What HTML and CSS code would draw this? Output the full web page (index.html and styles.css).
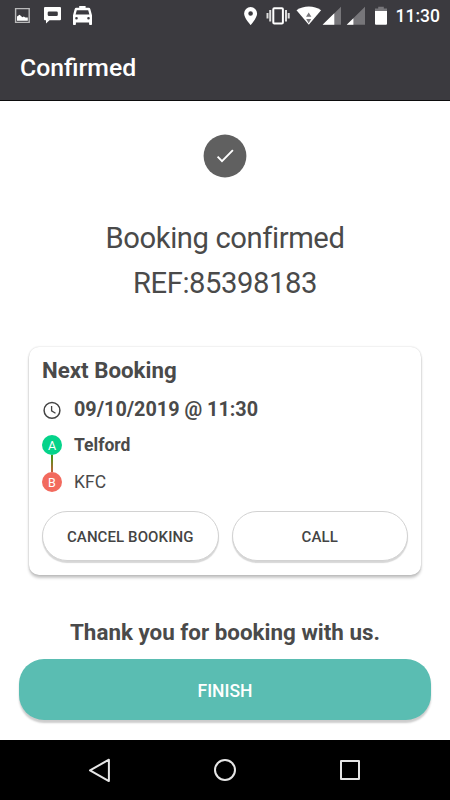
FILE: index.html
```html
<!DOCTYPE html>
<html lang="en">
<head>
	<meta charset="utf-8">
	<meta name="viewport" content="width=device-width, initial-scale=1" />
	<title>Confirmed</title>
	<link rel="stylesheet" href="styles.css">
</head>
<body>
	<header class="header">
		<div class="status">
			<svg class="status__left" width="100" height="32" viewBox="0 0 100 32">
				<!-- picture -->
				<path d="M15.600 8.600h13.600v13.800H15.600z" fill="none" stroke="#b9b9ba" stroke-width="1.400"/>
				<path d="M17 20.800v-4.400l2.600-1.600 2.800 2.400 1.400-.8 1.600 1.200 2.400-.2v3.400z" fill="#fff"/>
				<!-- message -->
				<path fill="#fff" fill-rule="evenodd" d="M45 7h15q1 0 1 1v11.200q0 1-1 1H49.500L46 23.500V20.200H45q-1 0-1-1V8q0-1 1-1zM49 11.500q-1.300 0-1.300 1.300v1.900q0 1.300 1.300 1.300h7.500q1.300 0 1.300-1.300v-1.900q0-1.300-1.300-1.300z"/>
				<!-- taxi -->
				<path fill="#fff" fill-rule="evenodd" d="M79.200 6h6.400v1.800h3.200q1.100 0 1.500 1.100l1.700 6.300V24.200q0 .8-.8.800h-1.300q-.8 0-.8-.8v-1.600H75.900v1.600q0 .8-.8.800h-1.300q-.8 0-.8-.8V15.200l1.700-6.300q.4-1.100 1.500-1.100h3zM76.800 10.200L75.600 14.400h13.800l-1.200-4.200zM76.500 17a1.300 1.300 0 1 0 0 2.600 1.300 1.300 0 0 0 0-2.600zM88.500 17a1.300 1.300 0 1 0 0 2.600 1.300 1.300 0 0 0 0-2.600z"/>
			</svg>
			<svg class="status__right" width="150" height="32" viewBox="240 0 150 32">
				<!-- location -->
				<path fill="#fff" fill-rule="evenodd" d="M250.600 7a6.500 6.500 0 0 0-6.500 6.500c0 4.600 6.500 11.500 6.500 11.500s6.500-6.900 6.500-11.500a6.500 6.500 0 0 0-6.500-6.500zm0 4.200a2.300 2.300 0 1 1 0 4.600 2.300 2.300 0 0 1 0-4.600z"/>
				<!-- vibrate -->
				<rect x="273.300" y="8.200" width="9.600" height="15.200" rx="1" fill="none" stroke="#fff" stroke-width="2"/>
				<path d="M270.200 10v11.500M286 10v11.500M267.500 13v5.500M288.700 13v5.500" stroke="#ddd" stroke-width="2"/>
				<!-- wifi -->
				<path fill="#fff" d="M308.800 24.800L296.500 10.200q5.500-3.700 12.300-3.700t12.300 3.700z"/>
				<path fill="#77767a" d="M308.700 12.500l2.700 4.300H306zM308.700 23.200l-2.500-4.200h5z"/>
				<!-- signal -->
				<path fill="#77767a" d="M322.600 24.800L341 6.700v18.100zM346.700 24.800L365 6.700v18.100z"/>
				<path fill="#fff" d="M322.600 24.800l11.700-11.500v11.500zM346.700 24.800l6.700-6.600v6.600z"/>
				<!-- battery -->
				<path fill="#77767a" d="M375 11V8.500h3.200V6.700h5.600v1.800h3.200V11z"/>
				<path fill="#fff" d="M375 11h12v12.800q0 1-1 1h-10q-1 0-1-1z"/>
			</svg>
			<span class="status__time">11:30</span>
		</div>
		<h1 class="header__title">Confirmed</h1>
	</header>

	<main class="content">
		<svg class="check" width="44" height="44" viewBox="0 0 44 44">
			<circle cx="22" cy="22" r="21.400" fill="#606060"/>
			<path d="M14.600 22.600l4.400 4.500 10.900-11" fill="none" stroke="#fff" stroke-width="1.900"/>
		</svg>

		<div class="message">
			<div>Booking confirmed</div>
			<div class="message__ref">REF:85398183</div>
		</div>

		<section class="card">
			<h2 class="card__title">Next Booking</h2>
			<div class="card__row card__row_date">
				<svg class="card__icon" width="20" height="20" viewBox="0 0 20 20">
					<circle cx="10" cy="10.400" r="7.900" fill="none" stroke="#444" stroke-width="1.500"/>
					<path d="M9.600 6.100v4.800l3.900 2.300" fill="none" stroke="#444" stroke-width="1.300"/>
				</svg>
				<span>09/10/2019 @ 11:30</span>
			</div>
			<div class="route">
				<div class="route__track">
					<span class="route__point route__point_a">A</span>
					<span class="route__line"></span>
					<span class="route__point route__point_b">B</span>
				</div>
				<div class="route__names">
					<div class="route__from">Telford</div>
					<div class="route__to">KFC</div>
				</div>
			</div>
			<div class="card__actions">
				<button class="btn" type="button">CANCEL BOOKING</button>
				<button class="btn" type="button">CALL</button>
			</div>
		</section>

		<p class="thanks">Thank you for booking with us.</p>
		<button class="finish" type="button">FINISH</button>
	</main>

	<nav class="nav">
		<svg width="26" height="26" viewBox="0 0 26 26">
			<path d="M21.900 2.700v21.400L3 13.300z"/>
		</svg>
		<svg width="26" height="26" viewBox="0 0 26 26">
			<circle cx="13" cy="13" r="10"/>
		</svg>
		<svg width="26" height="26" viewBox="0 0 26 26">
			<path d="M4 4h18v18H4z"/>
		</svg>
	</nav>
</body>
</html>
```

FILE: styles.css
```css
* {
	box-sizing: border-box;
}

body {
	margin: 0;
	height: 800px;
	display: flex;
	flex-direction: column;
	overflow: hidden;
	color: #4a4a4a;
	font-family: Roboto, sans-serif;
	background-color: #fff;
}


.header {
	height: 101px;
	color: #fff;
	border-bottom: 1px solid #0c0c0d;
	background-color: #3b3a3f;
}
	.header__title {
		margin: 0;
		padding-left: 20px;
		font-size: 24.8px;
		font-weight: 500;
		line-height: 72px;
	}

.status {
	height: 32px;
	display: flex;
	align-items: center;
	padding-right: 10px;
}
	.status__right {
		margin-left: auto;
	}

	.status__time {
		margin-left: 6px;
		font-size: 17.5px;
		font-weight: 500;
		line-height: 34px;
	}


.content {
	height: 639px;
	display: flex;
	flex-direction: column;
	align-items: center;
}

.check {
	margin-top: 33px;
	flex: none;
}

.message {
	margin-top: 38px;
	font-size: 29.2px;
	line-height: 45px;
	letter-spacing: -.4px;
	text-align: center;
}


.card {
	width: 392px;
	height: 228px;
	margin-top: 41px;
	padding: 10px 13px 13px 13px;
	border-radius: 10px;
	background-color: #fff;
	box-shadow: 0 3px 3px rgba(0,0,0,.22), 0 0 2px rgba(0,0,0,.2);
}
	.card__title {
		margin: 0;
		font-size: 22.3px;
		font-weight: 700;
		line-height: 27px;
	}

	.card__row {
		display: flex;
		align-items: center;
		gap: 12px;
	}

	.card__row_date {
		margin-top: 12px;
		font-size: 19.8px;
		font-weight: 700;
		line-height: 28px;
	}

	.card__actions {
		display: grid;
		grid-template-columns: 1fr 1fr;
		gap: 13px;
		margin-top: 18px;
	}


.route {
	display: flex;
	gap: 12px;
	margin-top: 11px;
}
	.route__track {
		width: 20px;
		display: flex;
		flex-direction: column;
		align-items: center;
	}

	.route__point {
		width: 20px;
		height: 20px;
		color: #fff;
		font-size: 12.5px;
		font-weight: 400;
		line-height: 22px;
		text-align: center;
		border-radius: 50%;
	}
	.route__point_a { background-color: #05d38a; }
	.route__point_b { background-color: #f26a5e; }

	.route__line {
		width: 2px;
		height: 17px;
		background-image: linear-gradient(#3f9a10, #c4603c);
	}

	.route__names {
		font-size: 17.5px;
		line-height: 21px;
	}

	.route__from {
		font-weight: 700;
	}

	.route__to {
		margin-top: 16px;
	}


.btn {
	height: 50px;
	padding: 2px 0 0;
	color: #444;
	font: 500 15px/46px Roboto, sans-serif;
	letter-spacing: .1px;
	border: 1px solid #d2d2d2;
	border-radius: 25px;
	background-color: #fff;
	box-shadow: 0 2px 1px rgba(0,0,0,.16);
}

.thanks {
	margin: 43px 0 0;
	font-size: 22.4px;
	font-weight: 700;
	line-height: 28px;
}

.finish {
	width: 412px;
	height: 61px;
	margin-top: 13px;
	padding: 3px 0 0;
	color: #fff;
	font: 500 17.5px/58px Roboto, sans-serif;
	border: 0;
	border-radius: 25px;
	background-color: #5abdb2;
	box-shadow: 0 3px 2px rgba(0,0,0,.2);
}


.nav {
	height: 60px;
	display: flex;
	align-items: center;
	justify-content: center;
	gap: 99px;
	background-color: #000;
}
	.nav svg {
		fill: none;
		stroke: #e6e6e6;
		stroke-width: 2;
		stroke-linejoin: round;
	}
```
